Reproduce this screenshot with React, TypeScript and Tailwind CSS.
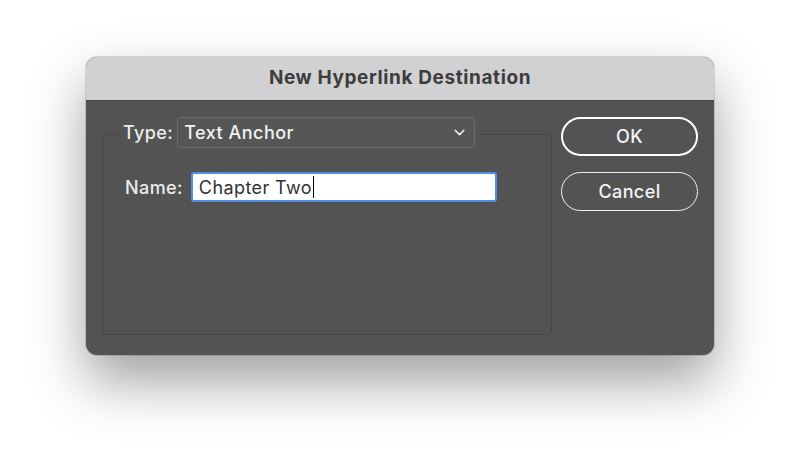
import { ChevronDown } from 'lucide-react';

export default function App() {
    return (
        <div className="w-[800px] h-[470px] bg-white pt-[57px] pl-[86px] font-['Inter','Noto_Sans',sans-serif]">
            <div className="w-[628px] h-[298px] rounded-[11px] overflow-hidden bg-[#535353] flex flex-col shadow-[0_26px_55px_rgba(0,0,0,0.38),0_0_0_1px_rgba(0,0,0,0.12)]">
                <div className="h-[44px] shrink-0 bg-[#d1d1d3] flex items-center justify-center border-b border-[#3f3f3f]">
                    <span className="text-[19px] font-bold text-[#3d3d3d] tracking-[0.6px]">New Hyperlink Destination</span>
                </div>
                <div className="flex flex-1 px-4 pt-[16px] pb-[20px]">
                    <fieldset className="w-[450px] h-full border border-[#474747] rounded-[4px] px-[16px]">
                        <legend className="pl-[4px] pr-[5px] pb-[3px] flex items-center">
                            <span className="text-[18px] text-[#ececec] font-medium tracking-[0.4px] mr-[4px]">Type:</span>
                            <div className="w-[298px] h-[31px] rounded-[4px] border border-[#6c6c6c] bg-[#565656] flex items-center justify-between pl-[6px] pr-[6px]">
                                <span className="text-[18px] text-[#f2f2f2] font-medium tracking-[0.5px]">Text Anchor</span>
                                <ChevronDown size={17} strokeWidth={2} className="text-[#ececec]" />
                            </div>
                        </legend>
                        <div className="flex items-center mt-[21px] pl-[6px]">
                            <span className="text-[18px] text-[#ececec] font-medium tracking-[0.4px] mr-[8px]">Name:</span>
                            <div className="w-[306px] h-[30px] bg-white rounded-[3px] border-2 border-[#4f8fe6] flex items-center pl-[6px]">
                                <span className="text-[18px] text-[#333333] tracking-[0.4px]">Chapter Two</span>
                                <span className="w-[1.5px] h-[22px] bg-black ml-[1px]" />
                            </div>
                        </div>
                    </fieldset>
                    <div className="ml-[9px] w-[137px] flex flex-col gap-[16px]">
                        <button className="h-[39px] rounded-full border-[2.5px] border-white text-[18px] text-[#f4f4f4] font-medium tracking-[0.4px]">OK</button>
                        <button className="h-[39px] rounded-full border-[1.5px] border-[#f0f0f0] text-[18px] text-[#f4f4f4] font-medium tracking-[0.4px]">Cancel</button>
                    </div>
                </div>
            </div>
        </div>
    );
}
